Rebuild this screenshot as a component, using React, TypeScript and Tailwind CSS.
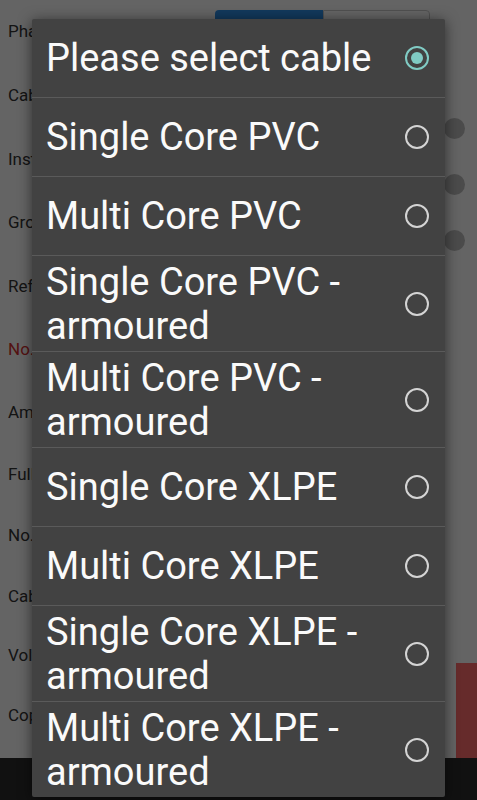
const labels = [
  { text: "Phase", h: 64, red: false },
  { text: "Cable type", h: 64, red: false },
  { text: "Installation", h: 63, red: false },
  { text: "Grouping", h: 64, red: false },
  { text: "Reference", h: 64, red: false },
  { text: "No. of cores", h: 62, red: true },
  { text: "Ambient", h: 63, red: false },
  { text: "Full load", h: 61, red: false },
  { text: "No. of runs", h: 62, red: false },
  { text: "Cable length", h: 59, red: false },
  { text: "Voltage drop", h: 60, red: false },
  { text: "Copper", h: 60, red: false },
];

const options = [
  { label: "Please select cable", selected: true },
  { label: "Single Core PVC", selected: false },
  { label: "Multi Core PVC", selected: false },
  { label: "Single Core PVC - armoured", selected: false },
  { label: "Multi Core PVC - armoured", selected: false },
  { label: "Single Core XLPE", selected: false },
  { label: "Multi Core XLPE", selected: false },
  { label: "Single Core XLPE - armoured", selected: false },
  { label: "Multi Core XLPE - armoured", selected: false },
];

const Radio = ({ checked }: { checked: boolean }) =>
  checked ? (
    <span className="flex items-center justify-center w-[24px] h-[24px] shrink-0 rounded-full border-2 border-[#80cbc4]">
      <span className="w-[12px] h-[12px] rounded-full bg-[#80cbc4]" />
    </span>
  ) : (
    <span className="w-[24px] h-[24px] shrink-0 rounded-full border-2 border-[#d4d4d4]" />
  );

const Background = () => (
  <div className="flex flex-col w-full h-full bg-[#fafafa]">
    <div className="flex h-[758px]">
      <div className="flex flex-col w-[200px] px-[8px]">
        {labels.map((l, i) => (
          <div
            key={i}
            className={`flex items-center shrink-0 text-[17px] whitespace-nowrap ${
              l.red ? "text-[#d32f2f]" : "text-[#333333]"
            }`}
            style={{ height: l.h }}
          >
            {l.text}
          </div>
        ))}
      </div>

      <div className="flex flex-col flex-1 pt-[10px]">
        <div className="flex w-[215px] h-[34px] ml-[15px]">
          <div className="w-[108px] h-full rounded-l-[4px] bg-[#2e8fe6]" />
          <div className="flex-1 h-full rounded-r-[4px] border border-[#c8c8c8]" />
        </div>

        <div className="flex flex-col items-end gap-[35px] mt-[74px] pr-[12px]">
          <span className="w-[21px] h-[21px] rounded-full bg-[#bcbcbc]" />
          <span className="w-[21px] h-[21px] rounded-full bg-[#bcbcbc]" />
          <span className="w-[21px] h-[21px] rounded-full bg-[#bcbcbc]" />
        </div>

        <div className="flex justify-end mt-auto">
          <div className="w-[21px] h-[95px] bg-[#ff6b6b]" />
        </div>
      </div>
    </div>

    <div className="flex-1 bg-[#2b2b2b]" />
  </div>
);

export default function App() {
  return (
    <div
      className="relative w-[477px] h-[800px] overflow-hidden"
      style={{ fontFamily: "Roboto, 'Noto Sans', sans-serif" }}
    >
      <Background />

      <div className="absolute inset-0 bg-black/60" />

      <div className="absolute left-[32px] top-[19px] w-[413px] flex flex-col rounded-[2px] bg-[#424242] shadow-[0_2px_14px_rgba(0,0,0,0.55)]">
        {options.map((opt, i) => (
          <div
            key={i}
            className={`flex items-center gap-[16px] min-h-[79px] py-[3.5px] pl-[14px] pr-[16px] ${
              i < options.length - 1 ? "border-b border-[#5a5a5a]" : ""
            }`}
          >
            <span className="flex-1 text-[38px] leading-[44px] text-[#fafafa]">
              {opt.label}
            </span>
            <Radio checked={opt.selected} />
          </div>
        ))}
      </div>
    </div>
  );
}
